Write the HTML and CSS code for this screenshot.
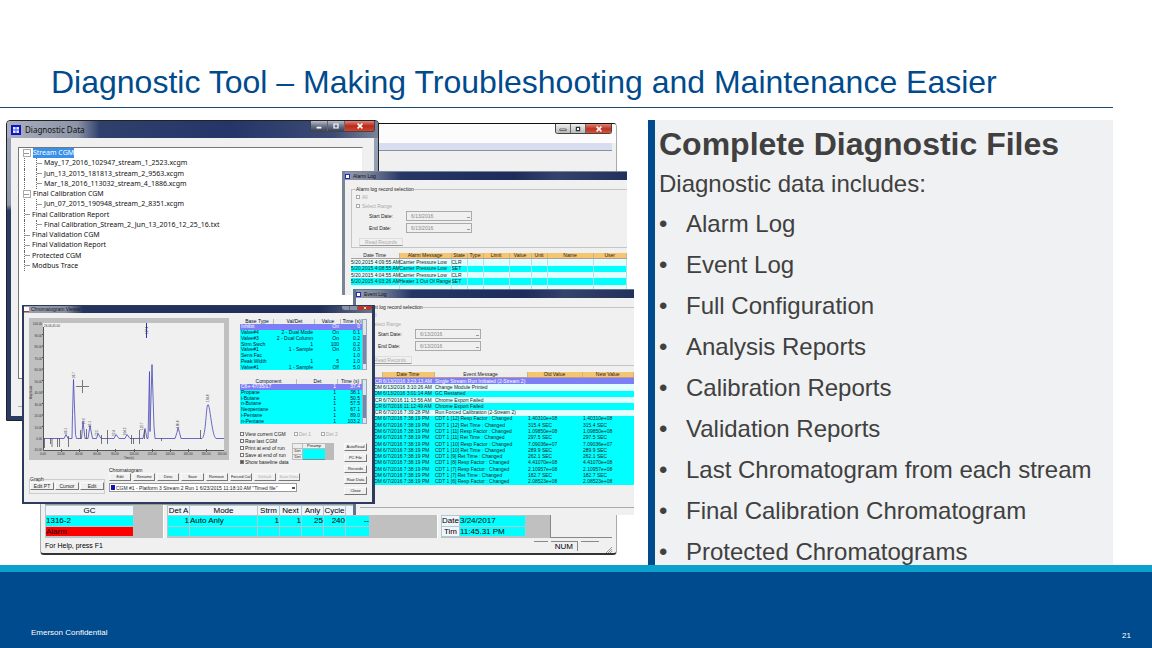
FILE: index.html
```html
<!DOCTYPE html>
<html lang="en">
<head>
<meta charset="utf-8">
<title>Diagnostic Tool – Making Troubleshooting and Maintenance Easier</title>
<link rel="stylesheet" href="styles.css">
</head>
<body>
<div class="slide">
<header class="slide-head"><h1>Diagnostic Tool – Making Troubleshooting and Maintenance Easier</h1></header>
<main class="content">
<div class="desktop">

<section class="win main-win" aria-label="Main window">
  <div class="main-title"><div class="caption-buttons"><button aria-label="Minimize"><svg viewBox="0 0 10 10"><path d="M1 5h8v2H1z" fill="#fff" stroke="#444"/></svg></button><button aria-label="Maximize"><svg viewBox="0 0 10 10"><path d="M3 3h4v4H3z" fill="#fff" stroke="#333" stroke-width="1.500"/></svg></button><button class="close" aria-label="Close"><svg viewBox="0 0 10 10"><path d="m2 2 6 6M8 2 2 8" stroke="#fff" stroke-width="2"/></svg></button></div></div>
  <div class="main-menu"></div>
  <div class="main-space"></div>
  <div class="status-panels">
    <table class="big gc"><thead><tr><th>GC</th></tr></thead><tbody><tr><td>1316-2</td></tr><tr class="alarm"><td>Alarm</td></tr></tbody></table>
    <span class="gap-gc"></span><span class="splitter"></span>
    <table class="big mode"><colgroup><col class="w22"><col class="w68"><col class="w22"><col class="w22"><col class="w22"><col class="w22"><col class="w24"></colgroup><thead><tr><th>Det A</th><th>Mode</th><th>Strm</th><th>Next</th><th>Anly</th><th>Cycle</th><th></th></tr></thead><tbody><tr><td class="r">1</td><td>Auto Anly</td><td class="r">1</td><td class="r">1</td><td class="r">25</td><td class="r">240</td><td class="r">--</td></tr><tr><td></td><td></td><td></td><td></td><td></td><td></td><td></td></tr></tbody></table>
    <span class="fill"></span><span class="splitter"></span>
    <table class="big date"><tbody><tr><th>Date</th><td>3/24/2017</td></tr><tr><th>Tim</th><td>11:45.31 PM</td></tr></tbody></table>
    <span class="gap-date"></span><span class="blank"></span>
  </div>
  <div class="statusbar"><span>For Help, press F1</span><span class="num-prev"></span><span class="num">NUM</span><span class="num-next"></span>
    <svg class="grip" viewBox="0 0 6 6"><path d="M0 6 6 0M2 6 6 2M4 6 6 4" stroke="#999"/></svg></div>
</section>

<section class="win diag-win" aria-label="Diagnostic Data">
  <div class="diag-title"><svg class="app-icon" viewBox="0 0 10 10"><path fill="#1212c8" d="M0 0h10v10H0z"/><path fill="#dfe8ff" d="M2 2h6v6H2z"/><path stroke="#4a62d8" d="M5 2v6M2 5h6" fill="none"/></svg><span>Diagnostic Data</span>
    <div class="caption-buttons large"><button aria-label="Minimize"><svg viewBox="0 0 10 10"><path d="M2 6h6v2H2z" fill="#fff"/></svg></button><button aria-label="Maximize"><svg viewBox="0 0 10 10"><path d="M2.500 2.500h5v5h-5z" fill="none" stroke="#fff" stroke-width="1.500"/></svg></button><button class="close" aria-label="Close"><svg viewBox="0 0 10 10"><path d="m2 2 6 6M8 2 2 8" stroke="#fff" stroke-width="2"/></svg></button></div></div>
  <div class="diag-body">
    <ul class="tree">
      <li class="node open"><span class="selected">Stream CGM</span></li>
      <li class="leaf">May_17_2016_102947_stream_1_2523.xcgm</li>
      <li class="leaf">Jun_13_2015_181813_stream_2_9563.xcgm</li>
      <li class="leaf">Mar_18_2016_113032_stream_4_1886.xcgm</li>
      <li class="node open">Final Calibration CGM</li>
      <li class="leaf">Jun_07_2015_190948_stream_2_8351.xcgm</li>
      <li class="node">Final Calibration Report</li>
      <li class="leaf">Final Calibration_Stream_2_Jun_13_2016_12_25_16.txt</li>
      <li class="node">Final Validation CGM</li>
      <li class="node">Final Validation Report</li>
      <li class="node">Protected CGM</li>
      <li class="node">Modbus Trace</li>
    </ul>
    <div class="diag-foot"></div>
  </div>
</section>

<section class="win log-win alarm-win" aria-label="Alarm Log">
  <div class="log-title"><i></i>Alarm Log</div>
  <div class="log-body">
    <fieldset class="selection"><legend>Alarm log record selection</legend>
      <label class="tick"><input type="checkbox">All</label>
      <label class="tick"><input type="checkbox">Select Range</label>
      <div class="date-row"><label for="a1">Start Date:</label><select id="a1"><option>6/13/2016</option></select></div>
      <div class="date-row"><label for="a2">End Date:</label><select id="a2"><option>6/13/2016</option></select></div>
      <button class="read">Read Records</button>
    </fieldset>
    <table class="log-table alarms"><colgroup><col class="w48"><col class="w52"><col class="w16"><col class="w16"><col class="w26"><col class="w22"><col class="w16"><col class="w46"><col></colgroup>
      <thead><tr><th class="plain">Date Time</th><th>Alarm Message</th><th>State</th><th>Type</th><th>Limit</th><th>Value</th><th>Unit</th><th>Name</th><th>User</th></tr></thead>
      <tbody>
      <tr><td>5/20,2015 4:09:55 AM</td><td>Carrier Pressure Low</td><td>CLR</td><td></td><td></td><td></td><td></td><td></td><td></td></tr>
      <tr><td>5/20,2015 4:08:55 AM</td><td>Carrier Pressure Low</td><td>SET</td><td></td><td></td><td></td><td></td><td></td><td></td></tr>
      <tr><td>5/20,2015 4:04:55 AM</td><td>Carrier Pressure Low</td><td>CLR</td><td></td><td></td><td></td><td></td><td></td><td></td></tr>
      <tr><td>5/20,2015 4:03:26 AM</td><td>Heater 1 Out Of Range</td><td>SET</td><td></td><td></td><td></td><td></td><td></td><td></td></tr>
      <tr><td>&nbsp;</td><td></td><td></td><td></td><td></td><td></td><td></td><td></td><td></td></tr>
      </tbody></table>
  </div>
</section>

<section class="win log-win event-win" aria-label="Event Log">
  <div class="log-title"><i></i>Event Log</div>
  <div class="log-body">
    <fieldset class="selection"><legend>Event log record selection</legend>
      <label class="tick"><input type="checkbox">All</label>
      <label class="tick"><input type="checkbox">Select Range</label>
      <div class="date-row"><label for="e1">Start Date:</label><select id="e1"><option>6/13/2016</option></select></div>
      <div class="date-row"><label for="e2">End Date:</label><select id="e2"><option>6/13/2016</option></select></div>
      <button class="read">Read Records</button>
    </fieldset>
    <table class="log-table events"><colgroup><col class="w22"><col class="w52"><col class="w93"><col class="w55"><col></colgroup>
      <thead><tr><th class="plain">ID</th><th>Date Time</th><th class="plain">Event Message</th><th>Old Value</th><th>New Value</th></tr></thead>
      <tbody>
      <tr class="hl"><td>SCR</td><td>6/13/2016 3:23:13 AM</td><td>Single Stream Run Initiated (2-Stream 2)</td><td></td><td></td></tr>
      <tr class="alt"><td>DM</td><td>6/13/2016 3:10:26 AM</td><td>Change Module Printed</td><td></td><td></td></tr>
      <tr><td>DM</td><td>6/13/2016 3:01:14 AM</td><td>GC Restarted</td><td></td><td></td></tr>
      <tr class="alt"><td>SCR</td><td>6/7/2016 11:13:56 AM</td><td>Chrome Export Failed</td><td></td><td></td></tr>
      <tr><td>SCR</td><td>6/7/2016 11:12:49 AM</td><td>Chrome Export Failed</td><td></td><td></td></tr>
      <tr class="alt"><td>SCR</td><td>6/7/2016 7:39:28 PM</td><td>Run Forced Calibration (2-Stream 2)</td><td></td><td></td></tr>
      <tr><td>DM</td><td>6/7/2016 7:38:19 PM</td><td>CDT 1 [12] Resp Factor : Changed</td><td>1.40310e+08</td><td>1.40310e+08</td></tr>
      <tr><td>DM</td><td>6/7/2016 7:38:19 PM</td><td>CDT 1 [12] Ret Time : Changed</td><td>315.4 SEC</td><td>315.4 SEC</td></tr>
      <tr><td>DM</td><td>6/7/2016 7:38:19 PM</td><td>CDT 1 [11] Resp Factor : Changed</td><td>1.09850e+08</td><td>1.09850e+08</td></tr>
      <tr><td>DM</td><td>6/7/2016 7:38:19 PM</td><td>CDT 1 [11] Ret Time : Changed</td><td>297.5 SEC</td><td>297.5 SEC</td></tr>
      <tr><td>DM</td><td>6/7/2016 7:38:19 PM</td><td>CDT 1 [10] Resp Factor : Changed</td><td>7.09036e+07</td><td>7.09036e+07</td></tr>
      <tr><td>DM</td><td>6/7/2016 7:38:19 PM</td><td>CDT 1 [10] Ret Time : Changed</td><td>289.9 SEC</td><td>289.9 SEC</td></tr>
      <tr><td>DM</td><td>6/7/2016 7:38:19 PM</td><td>CDT 1 [9] Ret Time : Changed</td><td>262.1 SEC</td><td>262.1 SEC</td></tr>
      <tr><td>DM</td><td>6/7/2016 7:38:19 PM</td><td>CDT 1 [8] Resp Factor : Changed</td><td>4.41070e+08</td><td>4.41070e+08</td></tr>
      <tr><td>DM</td><td>6/7/2016 7:38:19 PM</td><td>CDT 1 [7] Resp Factor : Changed</td><td>2.10957e+08</td><td>2.10957e+08</td></tr>
      <tr><td>DM</td><td>6/7/2016 7:38:19 PM</td><td>CDT 1 [7] Ret Time : Changed</td><td>182.7 SEC</td><td>182.7 SEC</td></tr>
      <tr><td>DM</td><td>6/7/2016 7:38:19 PM</td><td>CDT 1 [6] Resp Factor : Changed</td><td>2.08523e+08</td><td>2.08523e+08</td></tr>
      </tbody></table>
    <div class="log-foot"></div>
  </div>
</section>

<section class="win cgm-win" aria-label="Chromatogram Viewer">
  <div class="cgm-title"><i></i><span>Chromatogram Viewer</span><div class="caption-buttons mini"><button aria-label="Minimize"></button><button aria-label="Maximize"></button><button class="close" aria-label="Close"><svg viewBox="0 0 10 10"><path d="m2 2 6 6M8 2 2 8" stroke="#fff" stroke-width="2"/></svg></button></div></div>
  <div class="cgm-body">
    <svg class="chart" viewBox="29 318 200 142" role="img" aria-label="Chromatogram">
      <path fill="#c0c0c0" d="M29 318h200v142H29z"/><path fill="#f0f0f0" d="M43 323h181v127H43z"/>
      <path d="M43.500 327v123.500H224M42 334.500h2M42 346h2M42 357.500h2M42 369h2M42 380.500h2M42 392h2M42 403.500h2M42 415h2M42 426.500h2M61.500 449v3M79.500 449v3M97.500 449v3M115.500 449v3M134.500 449v3M152.500 449v3M170.500 449v3M188.500 449v3M206.500 449v3" stroke="#555" fill="none"/>
      <path d="M43 438.500H64l2-4 2 4h4l.500-24 1-35 2 55 1 4h5l1.500-17 2 17h3l2-13 2.500 13h4l1.500-5 3 5h13l2-4 3 4h6l2-4 3 4h13l2-10 2 10h1l1.500-67 .5 60 2-67 2 62 1 12H175l2-6 1-5 1.500 5 1.500 6h21c4-2 4-34 6-34s4 32 8 34h8" stroke="#4646b8" stroke-width=".8" fill="none"/>
      <path d="M146.500 323v15" stroke="#3030c0"/>
      <path d="M44.500 438v10M50.500 438v6M52 438v9M57.500 438v9M59.500 438v9M68.500 436v11M80.500 430v9M101.500 435v9M107.500 430v14M131.500 435v9M133.500 438v6M139.500 430v14M161.500 438v3M200.500 430v9M86.500 429v10M144.500 430v9" stroke="#555" stroke-width=".8"/>
      <path d="M76 386.500h13M82.500 380v13" stroke="#777"/>
      <g class="chart-text"><text x="44" y="326.500">26.04,45.00</text><g text-anchor="end"><text x="42" y="325">100.00</text><text x="42" y="337">90.00</text><text x="42" y="348">80.00</text><text x="42" y="360">70.00</text><text x="42" y="371">60.00</text><text x="42" y="383">50.00</text><text x="42" y="394">40.00</text><text x="42" y="406">30.00</text><text x="42" y="417">20.00</text><text x="42" y="429">10.00</text><text x="42" y="440">0.00</text><text x="42" y="451">-10.00</text></g>
      <g text-anchor="middle"><text x="43" y="455">0.00</text><text x="61" y="455">20.00</text><text x="79" y="455">40.00</text><text x="97" y="455">60.00</text><text x="115" y="455">80.00</text><text x="134" y="455">100.00</text><text x="152" y="455">120.00</text><text x="170" y="455">140.00</text><text x="188" y="455">160.00</text><text x="206" y="455">180.00</text><text x="222" y="455">200.00</text><text x="129" y="459">Time(s)</text></g>
      <text transform="translate(32 399) rotate(-90)">Amplitude</text>
      <g><text transform="translate(75 378) rotate(-90)">36.7</text><text transform="translate(67 434) rotate(-90)">33.1</text><text transform="translate(85 424) rotate(-90)">59.6</text><text transform="translate(91 427) rotate(-90)">65.1</text><text transform="translate(98 436) rotate(-90)">72.5</text><text transform="translate(115 436) rotate(-90)">92.4</text><text transform="translate(126 435) rotate(-90)">104.2</text><text transform="translate(143 430) rotate(-90)">122.7</text><text transform="translate(148 334) rotate(-90)">127.4</text><text transform="translate(179 428) rotate(-90)">160.8</text><text transform="translate(209 402) rotate(-90)">194.8</text></g></g>
    </svg>
    <div class="cgm-tables">
      <div class="scroll-table"><table class="cgm-table t1"><colgroup><col class="w34"><col class="w41"><col class="w26"><col></colgroup><thead><tr><th>Base Type</th><th>Val/Det</th><th>Value</th><th>Time (s)</th></tr></thead><tbody>
        <tr class="hl"><td>Inhibit</td><td></td><td>On</td><td>0</td></tr><tr><td>Valve#4</td><td>2 - Dual Mode</td><td>On</td><td>0.1</td></tr><tr><td>Valve#3</td><td>2 - Dual Column</td><td>On</td><td>0.2</td></tr><tr><td>Strm Swch</td><td>1</td><td>100</td><td>0.2</td></tr><tr><td>Valve#1</td><td>1 - Sample</td><td>On</td><td>0.3</td></tr><tr><td>Sens Fac</td><td></td><td></td><td>1.0</td></tr><tr><td>Peak Width</td><td>1</td><td>5</td><td>1.0</td></tr><tr><td>Valve#1</td><td>1 - Sample</td><td>Off</td><td>5.0</td></tr></tbody></table><span class="scrollbar"><b></b></span></div>
      <div class="scroll-table"><table class="cgm-table t2"><colgroup><col class="w57"><col class="w41"><col></colgroup><thead><tr><th>Component</th><th>Det</th><th>Time (s)</th></tr></thead><tbody>
        <tr class="hl"><td>C6+ 47/35/17</td><td>1</td><td>37.4</td></tr><tr><td>Propane</td><td>1</td><td>38.1</td></tr><tr><td>i-Butane</td><td>1</td><td>50.5</td></tr><tr><td>n-Butane</td><td>1</td><td>57.5</td></tr><tr><td>Neopentane</td><td>1</td><td>67.1</td></tr><tr><td>i-Pentane</td><td>1</td><td>89.0</td></tr><tr><td>n-Pentane</td><td>1</td><td>103.2</td></tr></tbody></table><span class="scrollbar"><b></b></span></div>
    </div>
    <div class="options">
      <div><label><input type="checkbox">View current CGM</label><label><input type="checkbox">Raw last CGM</label><label><input type="checkbox">Print at end of run</label><label><input type="checkbox">Save at end of run</label><label><input type="checkbox" checked>Show baseline data</label></div>
      <div><div class="dets"><label><input type="checkbox" disabled>Det 1</label><label><input type="checkbox" disabled>Det 2</label></div>
      <table class="preamp"><thead><tr><th></th><th>Preamp</th></tr></thead><tbody><tr><th>Det</th><td></td></tr><tr><th>Det</th><td></td></tr></tbody></table></div>
    </div>
    <div class="side-buttons"><button>AutoRead</button><button>PC File</button><button>Records</button><button>Raw Data</button><button>Close</button></div>
    <fieldset class="graph"><legend>Graph</legend><button>Edit PT</button><button>Cursor</button><button>Edit</button></fieldset>
    <fieldset class="cgm-set"><legend>Chromatogram</legend><div class="btns"><button>Edit</button><button>Rename</button><button>Desc</button><button>Save</button><button>Remove</button><button>Forced Cal</button><button disabled>Default</button><button disabled>Save Desc</button></div>
      <div class="cgm-pick"><i></i><select aria-label="Chromatogram"><option>CGM #1 - Platform 3 Stream 2 Run 1 6/23/2015 11:18:10 AM "Timed file"</option></select></div></fieldset>
  </div>
</section>
</div>

<aside class="panel">
  <h2>Complete Diagnostic Files</h2>
  <p>Diagnostic data includes:</p>
  <ul><li>Alarm Log</li><li>Event Log</li><li>Full Configuration</li><li>Analysis Reports</li><li>Calibration Reports</li><li>Validation Reports</li><li>Last Chromatogram from each stream</li><li>Final Calibration Chromatogram</li><li>Protected Chromatograms</li></ul>
</aside>
</main>
<footer class="slide-foot"><span>Emerson Confidential</span><span class="page">21</span></footer>
</div>
</body>
</html>
```
FILE: styles.css
```css
* { box-sizing: border-box; }
body { margin: 0; font-family: "Liberation Sans", Arial, sans-serif; background: #fff; color: #404040; }
h1, h2, p, ul, fieldset { margin: 0; padding: 0; }
ul { list-style: none; }
fieldset { border: 0; min-width: 0; }
button, select, input { font: inherit; color: inherit; margin: 0; padding: 0; border-radius: 0; }
select, input { appearance: none; }
table { border-collapse: collapse; table-layout: fixed; }
th, td { padding: 0; font-weight: normal; white-space: nowrap; }
svg { display: block; }

.slide { min-height: 100vh; display: flex; flex-direction: column; }
.slide-head { margin-right: 39px; padding: 64px 0 7px 51px; border-bottom: 1px solid #1c4a70; }
h1 { font-size: 32px; line-height: 36px; font-weight: normal; color: #004b8d; white-space: nowrap; }
.content { display: flex; margin: 12px 39px 0 0; }
.desktop { position: relative; flex: 0 0 648px; }
.panel { flex: 1; min-width: 0; background: #f0f1f2; border-left: 7px solid #004b8d; padding: 6px 0 0 4px; }
.panel h2 { font-size: 32px; line-height: 36px; }
.panel p { font-size: 24px; line-height: 30px; margin: 7px 0 4px; }
.panel ul { height: 362px; display: grid; grid-auto-rows: 41px; }
.panel li { display: flex; font-size: 24px; line-height: 41px; }
.panel li::before { content: "•"; flex: 0 0 27px; }
.slide-foot { flex: 1; display: flex; justify-content: space-between; align-items: flex-end; background: #004b8d; border-top: 7px solid #0ca1cd; color: #fff; font-size: 8px; line-height: 10px; padding: 0 21px 7px 31px; }
.slide-foot span { padding-bottom: 3px; }
.slide-foot .page { padding: 0; }

/* shared window parts */
.win { position: absolute; overflow: hidden; display: flex; flex-direction: column; color: #222; background: #f0f0f0; font-size: 5px; line-height: 6px; }
.caption-buttons { display: flex; align-self: flex-start; margin-left: auto; border: 1px solid #444; border-top: 0; border-radius: 0 0 3px 3px; overflow: hidden; }
.caption-buttons button { width: 15px; height: 9px; border: 0; border-right: 1px solid #666; background: linear-gradient(#eee, #bbb); display: flex; justify-content: center; align-items: center; }
.caption-buttons .close { width: 25px; border: 0; background: linear-gradient(#df8575, #bd3020 55%, #d4553c); color: #fff; }
.caption-buttons.large button { width: 17px; height: 10px; background: linear-gradient(#b7bdca, #68728a 50%, #39435f); }
.caption-buttons.large .close { width: 29px; background: linear-gradient(#df8575, #b82b1c 50%, #d3442c); }
.caption-buttons svg { width: 8px; height: 8px; }
.caption-buttons.mini { border: 0; }
.caption-buttons.mini button { width: 8px; height: 4px; background: #8a93a8; }
.caption-buttons.mini .close { width: 14px; background: #b5382c; }
.caption-buttons.mini svg { width: 4px; height: 4px; }

/* main window */
.main-win { left: 40px; top: 3px; width: 577px; height: 432px; border: 1px solid #aaa; border-top-color: #111; border-bottom: 2px solid #333; border-radius: 4px; padding: 0 4px; font-size: 8px; line-height: 10px; color: #000; }
.main-title { height: 19px; margin: 0 -4px; padding-right: 4px; background: #fcfcfc; display: flex; }
.main-menu { height: 8px; background: #d8def0; border-bottom: 1px solid #8a90a0; }
.main-space { flex: 1; border-top: 13px solid #f0f0f0; background: #f0f0f0; }
.status-panels { display: flex; height: 38px; background: #c0c0c0; border-top: 4px solid #999; border-bottom: 1px solid #eee; }
.big { background: #0ff; height: 32px; line-height: 9px; }
.big th, .big td { border: 1px solid #b0c8d0; height: 10px; }
.big th { background: #f0f4fb; }
.gc { width: 89px; }
.gc .alarm { background: #f00; }
.mode { width: 202px; }
.date { width: 85px; margin-top: 10px; height: 22px; }
.date th { width: 18px; }
.gap-gc { width: 29px; }
.splitter { width: 4px; background: #f0f0f0; border-left: 1px solid #fff; }
.fill { flex: 1; }
.gap-date { width: 24px; }
.blank { width: 62px; background: #f0f0f0; border: solid #888; border-width: 0 0 1px 1px; }
.statusbar { display: flex; align-items: center; height: 14px; gap: 3px; font-size: 7px; }
.num { padding: 0 4px; border-top: 1px solid #888; border-right: 1px solid #888; font-size: 8px; line-height: 9px; }
.num-prev { width: 14px; height: 10px; border-top: 1px solid #888; margin-left: auto; }
.num-next { width: 18px; height: 10px; border-top: 1px solid #888; margin-right: 4px; }
.grip { width: 6px; height: 6px; align-self: flex-end; }
.w16 { width: 16px; } .w22 { width: 22px; } .w24 { width: 24px; } .w26 { width: 26px; } .w34 { width: 34px; } .w41 { width: 41px; } .w46 { width: 46px; } .w48 { width: 48px; } .w52 { width: 52px; } .w55 { width: 55px; } .w57 { width: 57px; } .w68 { width: 68px; } .w93 { width: 93px; }
.r { text-align: right; }

/* diagnostic data tree */
.diag-win { left: 6px; top: 0; width: 373px; height: 301px; border: 1px solid #222; border-radius: 4px 4px 0 0; padding: 0 4px 4px; background: linear-gradient(#9aa3b6, #8e98ad 28%, #2b3c64 30%); }
.diag-title { margin: 0 -4px; padding: 0 3px 0 4px; height: 17px; display: flex; align-items: center; gap: 4px; font: 8px "Noto Sans", sans-serif; color: #111; background: linear-gradient(90deg, #a9afbd, #8d94a6 19%, #2f406c 25%, #25356a 60%, #3c4b73 88%, #7b8398); }
.app-icon { width: 10px; height: 10px; }
.diag-body { flex: 1; background: #f0f0f0; padding: 9px 11px 0 7px; }
.tree { height: 232px; border: 1px solid #777; border-right-color: #eee; background: #fff; display: grid; grid-template-rows: repeat(12, 1fr); padding: 0 0 107px 5px; font: 7px/10px "Noto Sans", sans-serif; color: #111; }
.tree li { display: flex; align-items: center; }
.tree li::before { content: ""; flex: none; height: 100%; width: 7px; border-left: 1px dotted #666; background: linear-gradient(#999, #999) 0 50% / 5px 1px no-repeat; }
.tree .open::before { width: 6px; height: 6px; border: 1px solid #aaa; margin: 0 2px 0 -1px; }
.tree .leaf { border-left: 1px dotted #666; padding-left: 11px; }
.selected { background: #3990e8; color: #fff; }
.diag-foot { height: 28px; border-bottom: 1px solid #aaa; }

/* alarm and event logs */
.log-win { border: solid #2b3a60; border-width: 1px 0 0 3px; }
.alarm-win { left: 342px; top: 51px; width: 285px; height: 124px; border-color: #7b8598; }
.event-win { left: 353px; top: 169px; width: 281px; height: 226px; border-color: #66718a; }
.log-title { height: 8px; display: flex; align-items: center; gap: 3px; line-height: 8px; background: linear-gradient(90deg, #9098a9, #7c849a 8%, #263766 20%, #1d2c5a 60%, #33436c 75%, #22315b); color: #111; }
.log-title i { width: 5px; height: 5px; background: #fff; border: 1px solid #1b2bc0; }
.log-body { padding: 6px 0 0 6px; }
.event-win .log-body { padding-left: 4px; }
.selection { height: 62px; border: 1px solid #c5c5c5; border-right: 0; padding-left: 4px; }
.selection legend { padding: 0; height: 6px; }
.tick { display: flex; align-items: center; gap: 2px; height: 9px; color: #aaa; }
input[type="checkbox"] { width: 4px; height: 4px; border: 1px solid #777; background: #fff; flex: none; }
.tick input[type="checkbox"] { border-color: #aaa; }
.date-row { display: flex; align-items: center; height: 12px; padding-left: 13px; }
.date-row label { width: 37px; }
.date-row select { width: 66px; height: 10px; padding-left: 4px; border: 1px solid #aaa; color: #888; background: linear-gradient(#999, #999) 60px 5px / 3px 1px no-repeat; }
.read { display: block; width: 44px; height: 8px; margin: 4px 0 0 3px; border: 1px solid #ddd; border-bottom-color: #999; background: #f0f0f0; color: #aaa; line-height: 6px; }
.log-table { width: 100%; line-height: 5px; background: #0ff; }
.log-table th { background: #f5c56f; border-right: 1px solid #c9b48c; border-bottom: 1px solid #b99; }
.log-table .plain { background: #eee; }
.alarms { margin-top: 5px; height: 38px; }
.alarms tbody tr:nth-child(odd), .log-table .alt { background: #e2ffff; }
.alarms td { border-right: 1px solid #b0e4e4; }
.events { height: 113px; margin-top: 6px; }
.events td:first-child { text-align: right; }
.events td + td { padding-left: 1px; }
.log-table .hl, .cgm-table .hl { background: #7f7ff5; color: #fff; }
.log-foot { height: 23px; border-bottom: 1px solid #aaa; }

/* chromatogram viewer */
.cgm-win { left: 22px; top: 185px; width: 353px; height: 199px; border: 2px solid #2c3a5c; border-top-width: 1px; border-right-width: 3px; }
.cgm-title { display: flex; align-items: center; gap: 2px; height: 7px; background: linear-gradient(90deg, #9ba2b1, #858ca0 12%, #25345f 17%, #1f2d58 85%, #6a748b); line-height: 7px; }
.cgm-title i { width: 5px; height: 5px; background: #fff; border-bottom: 1px solid #b33; }
.cgm-body { display: grid; grid-template-columns: 80px 131px 64px 40px 23px; grid-template-rows: 110px 40px 26px; padding: 5px; }
.chart { grid-area: 1 / 1 / 3 / 3; width: 200px; height: 142px; }
.chart-text { font-size: 3px; fill: #333; }
.cgm-tables { grid-area: 1 / 3 / 2 / 6; padding-top: 1px; display: flex; flex-direction: column; gap: 9px; }
.scroll-table { display: flex; }
.cgm-table { flex: 1; line-height: 5px; background: #0ff; color: #013; }
.cgm-table th { background: #eee; box-shadow: inset -1px 0 #bbb; text-align: center; }
.cgm-table td { text-align: right; padding-right: 2px; }
.cgm-table td:first-child { text-align: left; padding-left: 1px; }
.t1 { height: 51px; } .t2 { height: 45px; }
.scrollbar { width: 5px; display: flex; padding: 5px 0; background: #dde4f0; border: 1px solid #9ab; }
.scrollbar b { flex: 1; margin-top: 10px; background: #7587ad; }
.options { grid-area: 2 / 3 / 3 / 5; display: flex; padding-top: 2px; }
.options > div:first-child { width: 52px; }
.options label { display: flex; align-items: center; gap: 1px; height: 7px; white-space: nowrap; }
.options input:checked { background: #555; }
.options .dets { display: flex; gap: 10px; padding-left: 2px; color: #aaa; }
.options .dets input { border-color: #aaa; }
.preamp { width: 42px; height: 17px; margin-top: 6px; border: 1px solid #888; border-right: 9px solid #bbb; font-size: 4px; line-height: 4px; }
.preamp th { background: #eee; border: 1px solid #bbb; }
.preamp th:first-child { width: 10px; }
.preamp td { background: #0ff; }
.side-buttons { grid-area: 2 / 5 / 4 / 6; padding-top: 15px; display: flex; flex-direction: column; gap: 3px; }
.side-buttons button, .graph button, .btns button { height: 8px; border: 1px solid #fafafa; border-right-color: #777; border-bottom-color: #777; background: #f0f0f0; line-height: 6px; white-space: nowrap; font-size: 4px; }
.graph { grid-area: 3 / 1 / 4 / 2; width: 76px; height: 17px; align-self: end; display: flex; gap: 1px; border: 1px solid #ccc; }
.graph legend, .cgm-set legend { padding: 0; height: 5px; line-height: 5px; }
.graph button { width: 24px; font-size: 5px; }
.cgm-set { grid-area: 3 / 2 / 4 / 4; width: 191px; }
.btns { display: flex; gap: 2px; height: 9px; }
.btns button { flex: 1; }
.btns button:disabled { color: #aaa; }
.cgm-pick { display: flex; align-items: center; gap: 1px; width: 188px; height: 9px; padding: 0 1px; background: #fff; border: 1px solid #999; margin-top: 1px; }
.cgm-pick i { width: 4px; height: 5px; background: #1414a8; }
.cgm-pick select { flex: 1; min-width: 0; height: 7px; border: 0; font-size: 5px; background: linear-gradient(#555, #555) 100% 50% / 3px 2px no-repeat; }
```
